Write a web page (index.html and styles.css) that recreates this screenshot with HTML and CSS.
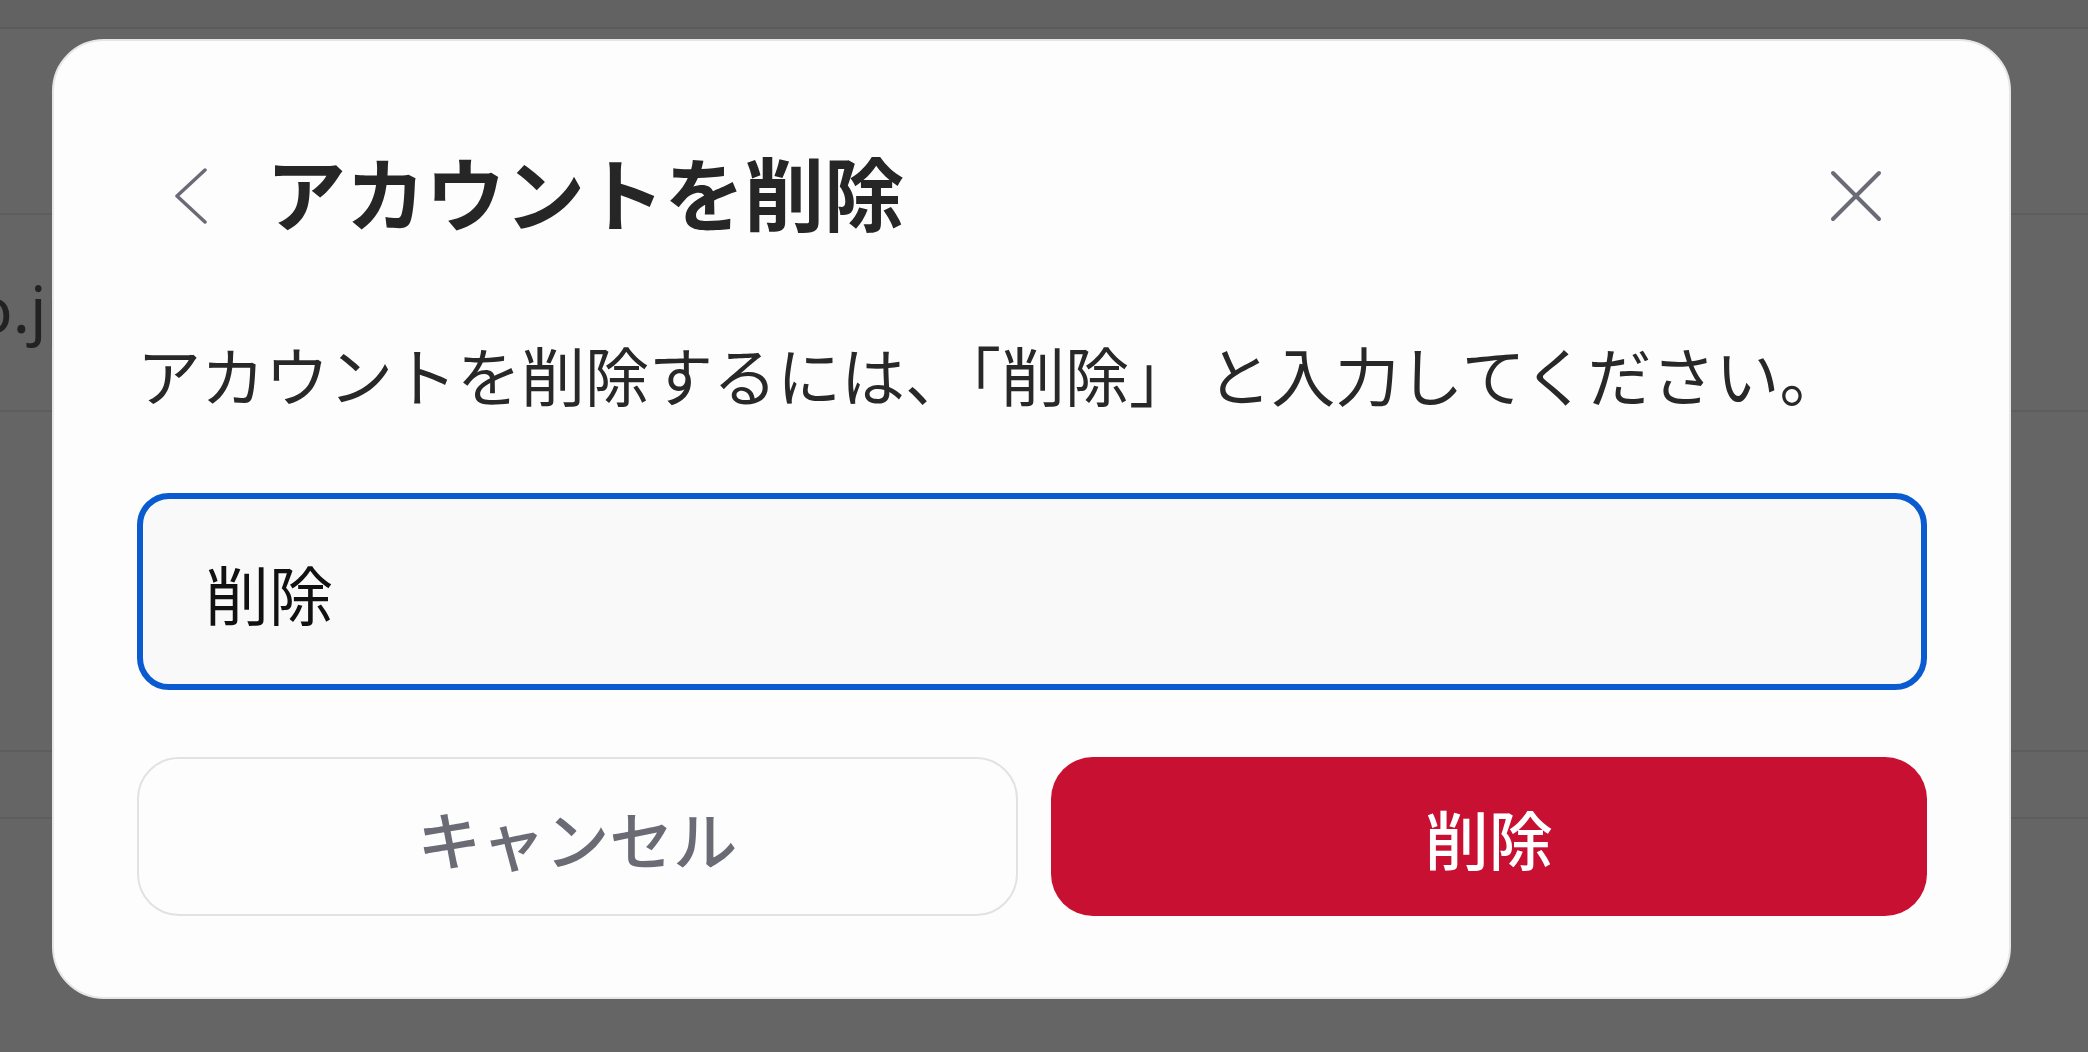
FILE: index.html
```html
<!DOCTYPE html>
<html lang="ja">
<head>
<meta charset="utf-8">
<title>アカウントを削除</title>
<link rel="stylesheet" href="styles.css">
</head>
<body>
<div class="page">
  <div class="bg">
    <div class="bg-top"></div>
    <div class="bg-row r1"></div>
    <div class="bg-row r2"><span class="bg-text">info.jp</span></div>
    <div class="bg-row r3"></div>
    <div class="bg-row r4"></div>
  </div>
  <div class="overlay">
    <div class="modal">
      <div class="modal-header">
        <button class="icon-btn" aria-label="戻る">
          <svg width="56" height="56" viewBox="0 0 56 56"><path d="M42 2 L14 28 L42 54" fill="none" stroke="#6b6b78" stroke-width="3.5" stroke-linecap="round" stroke-linejoin="round"/></svg>
        </button>
        <h1 class="title">アカウントを削除</h1>
        <button class="icon-btn close" aria-label="閉じる">
          <svg width="56" height="56" viewBox="0 0 56 56"><path d="M5 5 L51 51 M51 5 L5 51" fill="none" stroke="#6b6b78" stroke-width="4" stroke-linecap="round"/></svg>
        </button>
      </div>
      <p class="desc">アカウントを削除するには、「削除」 と入力してください。</p>
      <div class="input">削除</div>
      <div class="actions">
        <button class="btn btn-cancel">キャンセル</button>
        <button class="btn btn-delete">削除</button>
      </div>
    </div>
  </div>
</div>
</body>
</html>
```

FILE: styles.css
```css
html, body {
  margin: 0;
  padding: 0;
}
body {
  font-family: "Noto Sans CJK JP", "Noto Sans", sans-serif;
  background: #656565;
}
.page {
  position: relative;
  width: 2088px;
  height: 1052px;
  overflow: hidden;
  background: #656565;
}
.bg {
  display: flex;
  flex-direction: column;
}
.bg-top {
  height: 27px;
  background: #626262;
  border-bottom: 2px solid #5b5b5b;
}
.bg-row {
  border-bottom: 2px solid #5d5d5d;
  display: flex;
  align-items: center;
}
.r1 { height: 184px; }
.r2 { height: 195px; }
.r3 { height: 338px; }
.r4 { height: 65px; }
.bg-text {
  font-family: "Noto Sans", "Open Sans", sans-serif;
  font-size: 64px;
  color: #222222;
  margin-left: -104px;
  margin-top: -8px;
  white-space: nowrap;
}
.overlay {
  position: absolute;
  inset: 0;
  padding: 39px 0 0 52px;
}
.modal {
  box-sizing: border-box;
  width: 1959px;
  height: 960px;
  background: #fdfdfd;
  border: 2px solid #e6e6e6;
  border-radius: 52px;
  padding: 115px 82px 81px 83px;
  display: flex;
  flex-direction: column;
}
.modal-header {
  height: 80px;
  display: flex;
  align-items: center;
  padding: 0 43px 0 26px;
}
.icon-btn {
  width: 56px;
  height: 56px;
  padding: 0;
  margin: 0;
  border: none;
  background: none;
  display: flex;
}
.icon-btn.close {
  margin-left: auto;
}
.title {
  margin: 0 0 12px 47px;
  font-size: 80px;
  font-weight: 700;
  line-height: 80px;
  color: #262626;
  letter-spacing: -0.3px;
}
.desc {
  margin: 91px 0 0 0;
  font-size: 64px;
  line-height: 92px;
  color: #282828;
  white-space: nowrap;
}
.input {
  box-sizing: border-box;
  margin-top: 74px;
  height: 197px;
  border: 6px solid #0a5bd0;
  border-radius: 32px;
  background: #f9f9f9;
  padding-left: 62px;
  display: flex;
  align-items: center;
  font-size: 64px;
  color: #111111;
}
.actions {
  margin-top: 67px;
  display: flex;
  gap: 33px;
}
.btn {
  flex: 1;
  box-sizing: border-box;
  height: 159px;
  border-radius: 42px;
  font-family: "Noto Sans CJK JP", "Noto Sans", sans-serif;
  font-size: 64px;
  font-weight: 500;
  padding: 0;
  margin: 0;
}
.btn-cancel {
  background: #fdfdfd;
  border: 2px solid #e2e2e2;
  color: #6b6b76;
}
.btn-delete {
  background: #c81032;
  border: none;
  color: #ffffff;
}
```
